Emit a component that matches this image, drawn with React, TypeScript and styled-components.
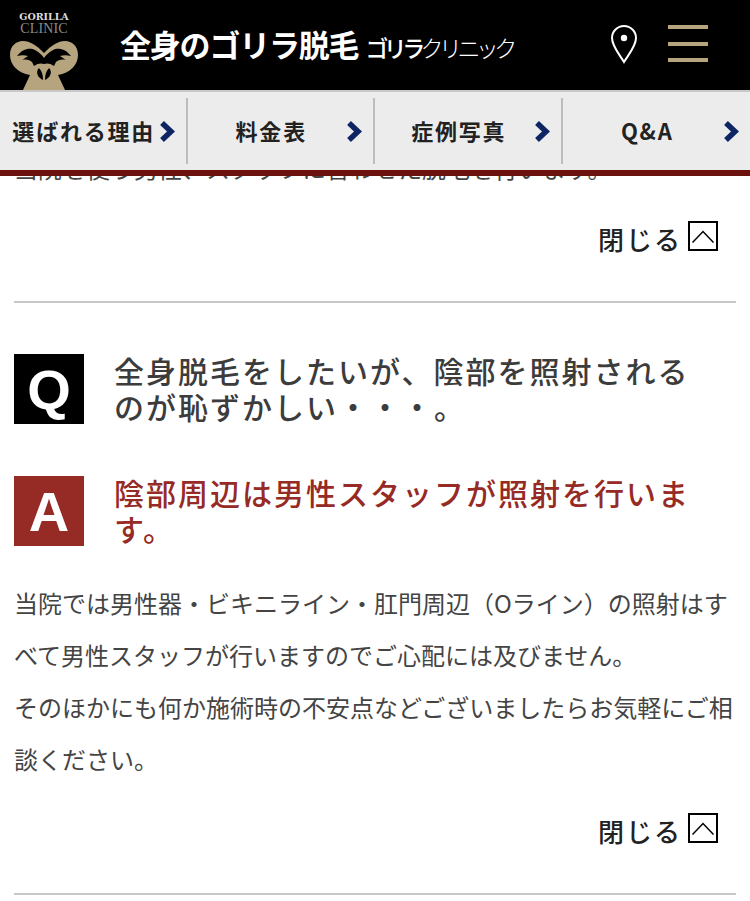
import styled, { createGlobalStyle } from "styled-components";

const GlobalStyle = createGlobalStyle`
  html, body {
    margin: 0;
    padding: 0;
    background: #fff;
    overflow: hidden;
  }
  body {
    font-family: "Noto Sans CJK JP", "Noto Sans", sans-serif;
  }
`;

const Page = styled.div`
  width: 750px;
  height: 901px;
  overflow: hidden;
  display: flex;
  flex-direction: column;
`;

const Header = styled.header`
  flex: none;
  height: 90px;
  background: #000;
  border-bottom: 2px solid #c8c8c8;
  display: flex;
  align-items: center;
`;

const Logo = styled.div`
  width: 88px;
  height: 90px;
  flex: none;
  display: flex;
  flex-direction: column;
  align-items: center;
  padding-top: 11px;
  box-sizing: border-box;
  margin-right: 32px;
`;

const LogoTop = styled.span`
  font-family: "DejaVu Serif", serif;
  font-size: 9.5px;
  line-height: 12px;
  font-weight: 700;
  color: #ddd;
`;

const LogoBottom = styled.span`
  font-family: "Liberation Serif", serif;
  font-size: 14px;
  line-height: 12px;
  letter-spacing: 0.1px;
  color: #8a8a8a;
`;

const GorillaIcon = styled.svg`
  width: 68px;
  height: 49px;
  margin-top: 6px;
`;

const SiteTitle = styled.div`
  display: flex;
  align-items: baseline;
  color: #fff;
  white-space: nowrap;
  width: 490px;
  padding-bottom: 4px;
`;

const TitleMain = styled.span`
  font-size: 31px;
  font-weight: 700;
  letter-spacing: -1.2px;
`;

const TitleSub = styled.span<{ $light?: boolean }>`
  font-size: 23px;
  font-weight: ${(p) => (p.$light ? 300 : 500)};
  letter-spacing: -4.6px;
  margin-left: ${(p) => (p.$light ? 0 : "7px")};
`;

const PinIcon = styled.svg`
  width: 28px;
  height: 40px;
  flex: none;
  margin: 0 30px 2px 0;
`;

const MenuIcon = styled.div`
  width: 40px;
  height: 37px;
  flex: none;
  margin-bottom: 3px;
  display: flex;
  flex-direction: column;
  justify-content: space-between;
`;

const MenuBar = styled.span`
  display: block;
  height: 4px;
  background: #b5a47e;
`;

const Nav = styled.nav`
  flex: none;
  height: 78px;
  background: #ececec;
  border-bottom: 6px solid #6b120e;
  display: flex;
  align-items: center;
  position: relative;
  z-index: 1;
`;

const NavItem = styled.div`
  width: 188px;
  height: 66px;
  box-sizing: border-box;
  border-right: 2px solid #bdbdbd;
  display: flex;
  align-items: center;
  justify-content: center;
  position: relative;
  font-size: 22px;
  font-weight: 700;
  color: #222;
  letter-spacing: 1.8px;
  white-space: nowrap;
  padding: 0 18px 2px 0;

  &:last-child {
    border-right: none;
  }
`;

const NavArrow = styled.svg`
  position: absolute;
  right: 11px;
  top: 23px;
  width: 16px;
  height: 21px;
`;

const Content = styled.main`
  flex: 1;
  min-height: 0;
  overflow: hidden;
  padding: 0 14px;
`;

const ClippedText = styled.p`
  margin: -34px 0 0;
  font-size: 24px;
  line-height: 52px;
  color: #444;
  white-space: nowrap;
`;

const CloseRow = styled.div<{ $top: number }>`
  display: flex;
  justify-content: flex-end;
  align-items: center;
  gap: 6px;
  height: 40px;
  margin-top: ${(p) => p.$top}px;
  padding-right: 18px;
  font-size: 26px;
  font-weight: 500;
  color: #222;
  letter-spacing: 2px;
`;

const CloseBox = styled.span`
  width: 30px;
  height: 30px;
  box-sizing: border-box;
  border: 2px solid #000;
  margin-bottom: 4px;
  display: flex;
  align-items: center;
  justify-content: center;
`;

const Divider = styled.hr`
  margin: 43px 0 0;
  border: none;
  border-top: 2px solid #c8c8c8;
`;

const QaRow = styled.div<{ $top: number }>`
  display: flex;
  gap: 30px;
  align-items: flex-start;
  margin-top: ${(p) => p.$top}px;
`;

const Badge = styled.span<{ $bg: string }>`
  flex: none;
  width: 70px;
  height: 70px;
  background: ${(p) => p.$bg};
  color: #fff;
  display: flex;
  align-items: center;
  justify-content: center;
  font-family: "Liberation Sans", sans-serif;
  font-weight: 700;
  font-size: 56px;
`;

const Heading = styled.h2<{ $color: string }>`
  margin: -2px 0 0;
  max-width: 590px;
  font-size: 30px;
  line-height: 36px;
  font-weight: 500;
  letter-spacing: 2px;
  color: ${(p) => p.$color};
`;

const Answer = styled.p`
  margin: 31px 0 0;
  font-size: 24px;
  line-height: 52px;
  color: #444;
`;

const CloseToggle = ({ top }: { top: number }) => (
  <CloseRow $top={top}>
    閉じる
    <CloseBox>
      <svg width="22" height="13" viewBox="0 0 22 13">
        <path d="M0.5 12.5L11 1.5l10.5 11" fill="none" stroke="#000" strokeWidth="1.5" />
      </svg>
    </CloseBox>
  </CloseRow>
);

export default function App() {
  return (
    <Page>
      <GlobalStyle />
      <Header>
        <Logo>
          <LogoTop>GORILLA</LogoTop>
          <LogoBottom>CLINIC</LogoBottom>
          <GorillaIcon viewBox="10 41 68 49">
            <path
              fill="#b5a47e"
              d="M10 55C10 46 16 41 23 41C31 41 38 47 44 53C50 47 57 41 65 41C72 41 78 46 78 55C78 65 70 73 58 75L65 90H23L30 75C18 73 10 65 10 55z"
            />
            <path
              fill="#000"
              d="M17 56C22 49 30 47 35 50C39 52 42 55 44 58C46 55 49 52 53 50C58 47 66 49 71 56C67 55 63 55 60 56L66 60C62 59 58 60 56 62L54 66C50 63 47 63 44 64C41 63 38 63 34 66L32 62C30 60 26 59 22 60L28 56C25 55 21 55 17 56z"
            />
            <path
              fill="#000"
              d="M39 68C42 71 43 75 43 80C38 78 35 72 39 68zM49 68C46 71 45 75 45 80C50 78 53 72 49 68z"
            />
          </GorillaIcon>
        </Logo>
        <SiteTitle>
          <TitleMain>全身のゴリラ脱毛</TitleMain>
          <TitleSub>ゴリラ</TitleSub>
          <TitleSub $light>クリニック</TitleSub>
        </SiteTitle>
        <PinIcon viewBox="0 0 28 40">
          <path
            d="M14 38C9 30 2 22 2 14a12 12 0 0 1 24 0c0 8-7 16-12 24z"
            fill="none"
            stroke="#fff"
            strokeWidth="2"
          />
          <circle cx="14" cy="14" r="3.2" fill="#fff" />
        </PinIcon>
        <MenuIcon>
          <MenuBar />
          <MenuBar />
          <MenuBar />
        </MenuIcon>
      </Header>
      <Nav>
        {["選ばれる理由", "料金表", "症例写真", "Q&A"].map((label) => (
          <NavItem key={label}>
            {label}
            <NavArrow viewBox="0 0 16 21">
              <path d="M3 2l9 8.5L3 19" fill="none" stroke="#0f2463" strokeWidth="5.5" />
            </NavArrow>
          </NavItem>
        ))}
      </Nav>
      <Content>
        <ClippedText>当院を使う男性、スタッフに合わせた脱毛を行います。</ClippedText>
        <CloseToggle top={24} />
        <Divider />
        <QaRow $top={51}>
          <Badge $bg="#000">Q</Badge>
          <Heading $color="#3c3c3c">全身脱毛をしたいが、陰部を照射されるのが恥ずかしい・・・。</Heading>
        </QaRow>
        <QaRow $top={52}>
          <Badge $bg="#962a24">A</Badge>
          <Heading $color="#962a24">陰部周辺は男性スタッフが照射を行います。</Heading>
        </QaRow>
        <Answer>
          当院では男性器・ビキニライン・肛門周辺（Oライン）の照射はすべて男性スタッフが行いますのでご心配には及びません。
          <br />
          そのほかにも何か施術時の不安点などございましたらお気軽にご相談ください。
        </Answer>
        <CloseToggle top={25} />
        <Divider />
      </Content>
    </Page>
  );
}
